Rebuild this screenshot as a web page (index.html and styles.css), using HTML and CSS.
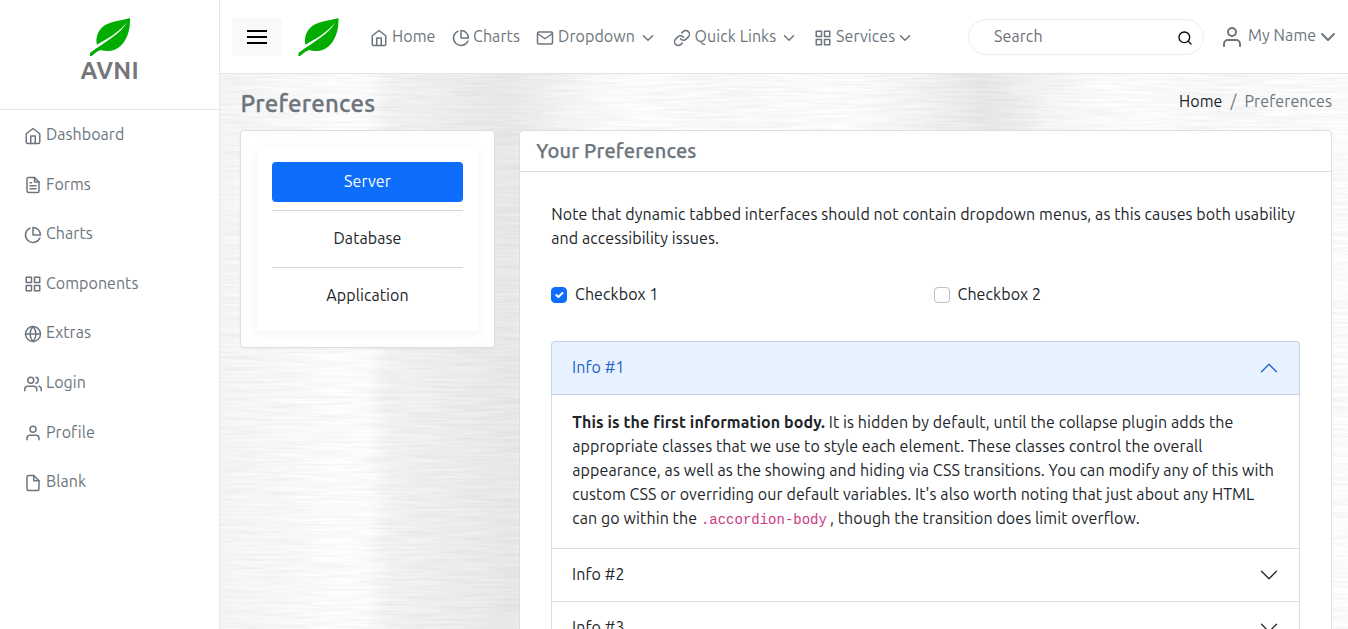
FILE: index.html
```html
<!DOCTYPE html>
<html lang="en">
<head>
<meta charset="utf-8">
<title>Preferences</title>
<link rel="stylesheet" href="styles.css">
</head>
<body>
<svg class="defs" width="0" height="0" aria-hidden="true">
  <symbol id="home" viewBox="0 0 24 24"><path d="M3 9l9-7 9 7v11a2 2 0 0 1-2 2H5a2 2 0 0 1-2-2z"/><path d="M9 22V12h6v10"/></symbol>
  <symbol id="file-text" viewBox="0 0 24 24"><path d="M14 2H6a2 2 0 0 0-2 2v16a2 2 0 0 0 2 2h12a2 2 0 0 0 2-2V8z"/><path d="M14 2v6h6M16 13H8M16 17H8M10 9H8"/></symbol>
  <symbol id="pie" viewBox="0 0 24 24"><path d="M21.21 15.89A10 10 0 1 1 8 2.83"/><path d="M22 12A10 10 0 0 0 12 2v10z"/></symbol>
  <symbol id="grid" viewBox="0 0 24 24"><path d="M3 3h7v7H3zM14 3h7v7h-7zM14 14h7v7h-7zM3 14h7v7H3z"/></symbol>
  <symbol id="globe" viewBox="0 0 24 24"><circle cx="12" cy="12" r="10"/><path d="M2 12h20M12 2a15.3 15.3 0 0 1 4 10 15.3 15.3 0 0 1-4 10 15.3 15.3 0 0 1-4-10 15.3 15.3 0 0 1 4-10z"/></symbol>
  <symbol id="users" viewBox="0 0 24 24"><path d="M17 21v-2a4 4 0 0 0-4-4H5a4 4 0 0 0-4 4v2"/><circle cx="9" cy="7" r="4"/><path d="M23 21v-2a4 4 0 0 0-3-3.87M16 3.13a4 4 0 0 1 0 7.75"/></symbol>
  <symbol id="user" viewBox="0 0 24 24"><path d="M20 21v-2a4 4 0 0 0-4-4H8a4 4 0 0 0-4 4v2"/><circle cx="12" cy="7" r="4"/></symbol>
  <symbol id="file" viewBox="0 0 24 24"><path d="M13 2H6a2 2 0 0 0-2 2v16a2 2 0 0 0 2 2h12a2 2 0 0 0 2-2V9z"/><path d="M13 2v7h7"/></symbol>
  <symbol id="mail" viewBox="0 0 24 24"><path d="M4 4h16c1.1 0 2 .9 2 2v12c0 1.1-.9 2-2 2H4c-1.1 0-2-.9-2-2V6c0-1.1.9-2 2-2z"/><path d="M22 6l-10 7L2 6"/></symbol>
  <symbol id="link" viewBox="0 0 24 24"><path d="M10 13a5 5 0 0 0 7.54.54l3-3a5 5 0 0 0-7.07-7.07l-1.72 1.71"/><path d="M14 11a5 5 0 0 0-7.54-.54l-3 3a5 5 0 0 0 7.07 7.07l1.71-1.71"/></symbol>
  <symbol id="search" viewBox="0 0 24 24"><circle cx="11" cy="11" r="8"/><path d="M21 21l-4.35-4.35"/></symbol>
  <symbol id="menu" viewBox="0 0 24 24"><path d="M2 6h20M2 12h20M2 18h20"/></symbol>
  <symbol id="down" viewBox="0 0 24 24"><path d="M6 9l6 6 6-6"/></symbol>
  <symbol id="chev" viewBox="0 0 16 16"><path d="M2 5l6 6 6-6"/></symbol>
  <symbol id="leaf" viewBox="0 0 120 114"><path d="M120 0C90 10 50 8 30 35C18 52 18 68 21 80C50 64 85 45 111 13C90 50 50 68 0 105V114H5C15 105 22 99 32 96C55 103 82 100 102 72C118 48 120 25 120 0Z"/></symbol>
</svg>
<div class="app">
  <aside class="sidebar">
    <div class="brand">
      <svg class="leaf"><use href="#leaf"/></svg>
      <span class="brand-name">AVNI</span>
    </div>
    <nav class="side-nav">
      <a class="side-link"><svg class="icon"><use href="#home"/></svg><span>Dashboard</span></a>
      <a class="side-link"><svg class="icon"><use href="#file-text"/></svg><span>Forms</span></a>
      <a class="side-link"><svg class="icon"><use href="#pie"/></svg><span>Charts</span></a>
      <a class="side-link"><svg class="icon"><use href="#grid"/></svg><span>Components</span></a>
      <a class="side-link"><svg class="icon"><use href="#globe"/></svg><span>Extras</span></a>
      <a class="side-link"><svg class="icon"><use href="#users"/></svg><span>Login</span></a>
      <a class="side-link"><svg class="icon"><use href="#user"/></svg><span>Profile</span></a>
      <a class="side-link"><svg class="icon"><use href="#file"/></svg><span>Blank</span></a>
    </nav>
  </aside>
  <div class="page">
    <header class="topbar">
      <button class="menu-btn"><svg class="menu-icon"><use href="#menu"/></svg></button>
      <svg class="leaf top-leaf"><use href="#leaf"/></svg>
      <nav class="top-nav">
        <a class="top-link home"><svg class="icon"><use href="#home"/></svg><span>Home</span></a>
        <a class="top-link charts"><svg class="icon"><use href="#pie"/></svg><span>Charts</span></a>
        <a class="top-link dropdown"><svg class="icon"><use href="#mail"/></svg><span>Dropdown</span><svg class="icon caret"><use href="#down"/></svg></a>
        <a class="top-link quick"><svg class="icon"><use href="#link"/></svg><span>Quick Links</span><svg class="icon caret"><use href="#down"/></svg></a>
        <a class="top-link services"><svg class="icon"><use href="#grid"/></svg><span>Services</span><svg class="icon caret"><use href="#down"/></svg></a>
      </nav>
      <div class="search"><span>Search</span><svg class="search-icon"><use href="#search"/></svg></div>
      <a class="account"><svg class="user-icon"><use href="#user"/></svg><span>My Name</span><svg class="user-icon account-caret"><use href="#down"/></svg></a>
    </header>
    <main class="main">
      <svg class="texture" aria-hidden="true">
        <filter id="brushed" x="0" y="0" width="100%" height="100%">
          <feTurbulence type="fractalNoise" baseFrequency="0.022 0.4" numOctaves="2" seed="7"/>
          <feColorMatrix values="0 0 0 0 0  0 0 0 0 0  0 0 0 0 0  0.085 0 0 0 -0.025"/>
        </filter>
        <rect width="100%" height="100%" filter="url(#brushed)"/>
      </svg>
      <div class="title-row">
        <h1 class="title">Preferences</h1>
        <div class="crumbs"><a class="crumb-home">Home</a><span class="slash">/</span><span>Preferences</span></div>
      </div>
      <div class="columns">
        <section class="card tabs-card">
          <div class="tabs">
            <button class="tab active">Server</button>
            <button class="tab">Database</button>
            <button class="tab">Application</button>
          </div>
        </section>
        <section class="card prefs">
          <h2 class="card-head">Your Preferences</h2>
          <div class="card-body">
            <p class="note">Note that dynamic tabbed interfaces should not contain dropdown menus, as this causes both usability<br>and accessibility issues.</p>
            <div class="checks">
              <label class="check"><span class="box on"><svg class="tick" viewBox="0 0 20 20"><path d="M6 10l3 3 6-6"/></svg></span><span class="check-text">Checkbox 1</span></label>
              <label class="check"><span class="box"></span><span class="check-text">Checkbox 2</span></label>
            </div>
            <div class="accordion">
              <div class="acc-head open"><span>Info #1</span><svg class="chev"><use href="#chev"/></svg></div>
              <div class="acc-body"><strong>This is the first information body.</strong> It is hidden by default, until the collapse plugin adds the<br>appropriate classes that we use to style each element. These classes control the overall<br>appearance, as well as the showing and hiding via CSS transitions. You can modify any of this with<br>custom CSS or overriding our default variables. It's also worth noting that just about any HTML<br>can go within the <code>.accordion-body</code>, though the transition does limit overflow.</div>
              <div class="acc-head"><span>Info #2</span><svg class="chev"><use href="#chev"/></svg></div>
              <div class="acc-head"><span>Info #3</span><svg class="chev"><use href="#chev"/></svg></div>
            </div>
          </div>
        </section>
      </div>
    </main>
  </div>
</div>
</body>
</html>
```
FILE: styles.css
```css
* { box-sizing: border-box; }
body {
  margin: 0;
  height: 629px;
  overflow: hidden;
  font: 16px/24px Ubuntu, "Noto Sans", sans-serif;
  letter-spacing: 0.09px;
  color: #212529;
  background: #fff;
}
.defs { position: absolute; }
svg { flex: none; fill: none; stroke: currentColor; stroke-width: 2; stroke-linecap: round; stroke-linejoin: round; }
button { font: inherit; letter-spacing: inherit; color: inherit; border: 0; padding: 0; }
.app { display: flex; height: 629px; }

.sidebar { width: 220px; flex: none; border-right: 1px solid #e5e7ea; background: #fff; color: #6c757d; }
.brand { height: 110px; border-bottom: 1px solid #e2e6ea; display: flex; flex-direction: column; align-items: center; padding-top: 18px; }
.leaf { width: 40px; height: 38px; fill: #00ad00; stroke: none; }
.brand-name { font-size: 24px; font-weight: 700; line-height: 30px; letter-spacing: 0.3px; padding-left: 0.5px; color: #76777a; }
.side-nav { display: flex; flex-direction: column; }
.side-link { display: flex; align-items: center; height: 49.57px; padding-left: 24px; gap: 4px; letter-spacing: 0.04px; }
.side-link span { padding-bottom: 1.3px; }
.icon { width: 18px; height: 18px; margin-top: 2px; }

.page { flex: 1; min-width: 0; display: flex; flex-direction: column; }
.topbar { height: 74px; flex: none; display: flex; align-items: center; padding-left: 12px; border-bottom: 1px solid #e2e4e6; color: #6c757d; }
.menu-btn { width: 50px; height: 38px; border-radius: 4px; background: #f8f9fb; color: #000; display: grid; place-items: center; }
.menu-icon { width: 24px; height: 24px; stroke-linecap: butt; }
.top-leaf { margin-left: 16px; width: 41px; }
.top-nav { display: flex; margin-left: 31px; width: 598px; }
.top-link { display: flex; align-items: center; gap: 4px; }
.top-link span { padding-bottom: 2px; }
.home { width: 82px; }
.charts { width: 84px; gap: 3px; }
.dropdown { width: 137px; }
.quick { width: 141px; gap: 3.5px; }
.services .caret { margin-left: -3px; }
.search { width: 236px; height: 36px; border: 1px solid #eceef4; border-radius: 18px; display: flex; align-items: center; justify-content: space-between; padding: 0 10px 2px 25px; color: #6f7073; }
.search-icon { width: 16px; height: 16px; color: #000; margin-top: 4px; }
.account { display: flex; align-items: center; margin-left: 16px; gap: 4px; }
.account span { padding-bottom: 3px; }
.user-icon { width: 24px; height: 24px; }
.account-caret { margin-left: -4px; }

.main {
  flex: 1; min-height: 0; position: relative; overflow: hidden; padding: 17px 16px 0 20px;
  background: linear-gradient(90deg, #f8f8f8 0, #fbfbfb 60px, #fff 115px, #ffffff 145px, #f5f5f5 170px, #ebebeb 290px, #f7f7f7 345px, #fff 400px, #fcfcfc 500px, #fff 630px, #f6f6f6 700px, #eaeaea 765px, #f7f7f7 825px, #fff 890px, #fcfcfc 1000px, #fff 1128px);
}
.texture { position: absolute; inset: 0; width: 100%; height: 100%; stroke: none; fill: #000; }
.title-row { position: relative; display: flex; justify-content: space-between; height: 39px; }
.title { margin: 0; font-size: 24px; line-height: 26px; font-weight: 500; -webkit-text-stroke: 0.3px #6c757d; color: #6c757d; letter-spacing: 0.2px; padding-left: 0.4px; }
.crumbs { display: flex; gap: 8px; line-height: 22px; margin-top: -1px; color: #6c757d; }
.crumb-home { color: #212529; }
.columns { position: relative; display: grid; grid-template-columns: 255px 813px; gap: 24px; align-items: start; }
.card { background: #fff; border: 1px solid #dedede; border-radius: 4px; }
.tabs-card { padding: 16px 15px; height: 218px; box-shadow: 0 1px 3px rgba(0, 0, 0, .05); }
.tabs { padding: 15px; height: 184px; margin: 0 1px; box-shadow: 0 2px 10px rgba(0, 0, 0, .055); }
.tab { display: block; width: 100%; height: 40px; border-radius: 4px; background: none; text-align: center; padding-bottom: 2px; position: relative; }
.tab + .tab { margin-top: 17px; }
.tab + .tab::before { content: ""; position: absolute; left: 0; right: 0; top: -9px; height: 1px; background: #d5d6d7; }
.active { background: #0d6efd; color: #fff; }
.prefs { height: 560px; }
.card-head { margin: 0; height: 41px; border-bottom: 1px solid #dedede; padding-left: 16.3px; font-size: 20px; line-height: 40px; font-weight: 500; -webkit-text-stroke: 0.25px #6c757d; color: #6c757d; letter-spacing: 0.18px; }
.card-body { padding: 30px 31px 0; }
.note { margin: 0 0 0 0.2px; white-space: nowrap; }
.checks { display: grid; grid-template-columns: 382.5px 1fr; margin-top: 33px; }
.check { display: flex; align-items: center; gap: 8px; height: 24px; }
.check-text { padding-bottom: 2px; }
.box { width: 16px; height: 16px; border: 1px solid #bfbfbf; border-radius: 4px; }
.on { background: #0d6efd; border-color: #0d6efd; color: #fff; }
.tick { display: block; width: 14px; height: 14px; stroke-width: 3; }
.accordion { margin-top: 34px; width: 749px; border: 1px solid #dcdddf; border-radius: 4px 4px 0 0; }
.acc-head { height: 53px; display: flex; align-items: center; justify-content: space-between; padding: 0 20px; border-bottom: 1px solid #dcdddf; }
.acc-head span { padding-bottom: 2px; }
.open { margin: -1px -1px 0; height: 54px; padding: 0 20px; color: #1b63c9; background: #e7f1ff; border: 1px solid #c6d3e5; border-radius: 4px 4px 0 0; }
.chev { width: 20px; height: 20px; stroke-width: 1; }
.open .chev { transform: rotate(180deg); }
.acc-body { height: 154px; padding: 15px 20px 15px 20.3px; border-bottom: 1px solid #dcdddf; white-space: nowrap; }
code { font: 14px/20px "Liberation Mono", monospace; letter-spacing: 0; color: #cb3a83; padding: 0 3px 0 0; }
```
